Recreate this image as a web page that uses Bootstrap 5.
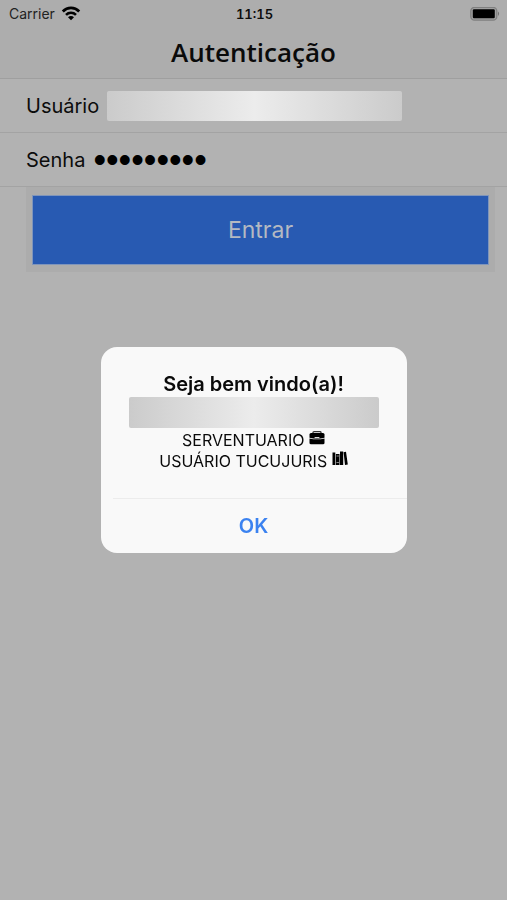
<!DOCTYPE html>
<html lang="pt-BR">
<head>
<meta charset="utf-8">
<meta name="viewport" content="width=device-width, initial-scale=1">
<title>Autenticação</title>
<link href="https://cdn.jsdelivr.net/npm/bootstrap@5.3.0/dist/css/bootstrap.min.css" rel="stylesheet">
<style>
body { background: #b2b2b2; color: #0c0c0c; font-family: Inter, "Liberation Sans", sans-serif; }
.app-header { background: #adadad; border-bottom: 1px solid #9f9f9f; }
.status-bar { height: 28px; padding: 0 7px 0 9px; font-size: 14px; line-height: 28px; color: #222; }
.status-time { font-size: 13px; font-weight: 600; color: #0c0c0c; font-variant-numeric: tabular-nums; }
.page-title { height: 50px; font: 600 26px/48px "Open Sans", "Noto Sans", sans-serif; color: #0a0a0a; }
.field-row { height: 54px; padding-left: 26px; border-bottom: 1px solid #a3a3a3; font-size: 20px; }
.field-input { border: 0; border-radius: 2px; padding: 0; height: 30px; outline: 0; min-width: 0; }
.shade { background: linear-gradient(90deg, #cbcbcb, #ececec 50%, #cbcbcb); }
.user-input { flex: 0 1 295px; }
.pass-input { flex: 1 1 0; background: transparent; font-family: "Liberation Sans", sans-serif; font-size: 36px; color: #000; }
.submit-frame { background: #acacac; margin: 0 12px 0 26px; padding: 8px 6px 7px; }
.submit-btn { height: 70px; border: 1px solid #7f95bb; border-radius: 0; background: #285ab2; color: #b4b9c2; font-size: 23px; }
.alert-dialog { max-width: 306px; }
.alert-box { border: 0; border-radius: 16px; background: #f9f9f9; color: #0a0a0a; }
.alert-body { padding: 25px 28px 26px; }
.alert-heading-text { font-size: 20px; line-height: 25px; font-weight: 600; }
.name-bar { height: 31px; border-radius: 2px; margin-bottom: 2px; background: linear-gradient(90deg, #cbcbcb, #ececec 50%, #cbcbcb); }
.role { font-size: 16px; line-height: 21px; }
.ok-btn { height: 54px; font-size: 20px; font-weight: 600; color: #3b82f0; border-radius: 0; }
.alert-rule { height: 1px; margin-left: 12px; background: #ececec; }
</style>
</head>
<body>
<header class="app-header">
  <div class="status-bar row g-0 align-items-center">
    <div class="col d-flex align-items-center gap-1">
      <span>Carrier</span>
      <svg width="24" height="16" viewBox="-2 1 24 16" fill="none" stroke="#000" aria-hidden="true"><path d="M1.800 6.400C6.400 1.800 13.600 1.800 18.200 6.400" stroke-width="2.800"/><path d="M5 9.800C7.800 7 12.200 7 15 9.800" stroke-width="2.600"/><path d="M10 15.200 7 12.200C8.800 10.600 11.200 10.600 13 12.200Z" fill="#000" stroke="none"/></svg>
    </div>
    <div class="col-auto status-time">11:15</div>
    <div class="col d-flex justify-content-end">
      <svg width="30" height="14" viewBox="0 0 30 14" aria-hidden="true"><rect x=".8" y=".4" width="26" height="12.800" rx="3.600" fill="#a0a0a0" stroke="#808080" stroke-width="1.300"/><rect x="2.800" y="2.300" width="22" height="9" rx="1.200"/><path d="M28 4.600q2.200 2.200 0 4.400z" fill="#707070"/></svg>
    </div>
  </div>
  <h1 class="page-title text-center mb-0">Autenticação</h1>
</header>
<main>
  <form>
    <div class="field-row d-flex align-items-center gap-2">
      <label for="user">Usuário</label>
      <input id="user" type="text" class="field-input user-input shade" autocomplete="off">
    </div>
    <div class="field-row d-flex align-items-center gap-2">
      <label for="pass">Senha</label>
      <input id="pass" type="password" class="field-input pass-input" value="123456789">
    </div>
    <div class="submit-frame">
      <button type="button" class="btn submit-btn w-100">Entrar</button>
    </div>
  </form>
</main>
<div class="modal d-block" role="dialog" aria-modal="true" aria-labelledby="welcome">
  <div class="modal-dialog modal-dialog-centered alert-dialog mx-auto">
    <div class="modal-content alert-box overflow-hidden">
      <div class="alert-body text-center">
        <h2 id="welcome" class="alert-heading-text mb-0">Seja bem vindo(a)!</h2>
        <div class="name-bar"></div>
        <div class="role">SERVENTUARIO
          <svg class="align-baseline" width="16" height="15" viewBox="0 0 16 15" aria-hidden="true"><path d="M4 3V1.500Q4 .7 5 .7H11Q12 .7 12 1.500V3" fill="none" stroke="#333" stroke-width="1.300"/><path d="M2 2H14Q15.500 2 15.500 3.500V6.800Q8 8.500.5 6.800V3.500Q.5 2 2 2Z"/><path d="M.5 7.400Q8 9.200 15.500 7.400V12Q15.500 13.300 14 13.300H2Q.5 13.300.5 12Z"/><rect x="5.500" y="6" width="5" height="1.300" rx=".6" fill="#ddd"/></svg>
        </div>
        <div class="role">USUÁRIO TUCUJURIS
          <svg class="align-baseline" width="16" height="16" viewBox="0 0 16 16" aria-hidden="true"><path d="M.5 1.500H3.300V14H.5ZM3.900 3H7.500V14H3.900ZM8 .5H11.200V14H8ZM11.600 1.200 14 .8 15.800 13.400 13 14Z"/><path d="M4.500 5H6.900M4.500 11.500H6.900" stroke="#aaa" stroke-width=".8"/></svg>
        </div>
      </div>
      <div class="alert-rule"></div>
      <button type="button" class="btn ok-btn w-100">OK</button>
    </div>
  </div>
</div>
<script src="https://cdn.jsdelivr.net/npm/bootstrap@5.3.0/dist/js/bootstrap.bundle.min.js"></script>
</body>
</html>
